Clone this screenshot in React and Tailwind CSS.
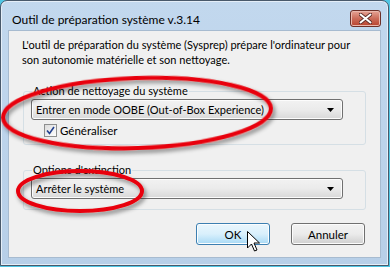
import React from "react";

function Dropdown({ text }) {
  return (
    <div className="flex h-[21px] items-center justify-between rounded-[3px] border border-[#707070] bg-gradient-to-b from-[#f2f2f2] via-[#ebebeb] to-[#d8d8d8] pl-[4px] pr-[8px] text-[11px] shadow-[inset_0_0_0_1px_#fcfcfc]">
      <span>{text}</span>
      <svg width="7" height="4" viewBox="0 0 7 4"><path d="M0 0H7L3.5 4Z" fill="#000" /></svg>
    </div>
  );
}

export default function App() {
  return (
    <div
      className="relative h-[267px] w-[390px] overflow-hidden bg-[#4fc6e4] text-[11.5px] leading-[15px] text-black"
      style={{ fontFamily: 'Lato, "Liberation Sans", sans-serif' }}
    >
      <div className="flex h-[266px] w-[389px] flex-col rounded-t-[7px] border border-[#49596b] bg-gradient-to-b from-[#c2d8ee] to-[#b7cfe8] shadow-[inset_0_0_0_1px_#e4eef8]">
        {/* title bar */}
        <div className="flex h-[29px] items-start justify-between">
          <div className="whitespace-nowrap pl-[11px] pt-[11px] text-[12px] text-[#000]">Outil de préparation système v.3.14</div>
          <div className="mr-[7px] mt-[9px] flex h-[17px] w-[31px] items-center justify-center rounded-[3px] border border-[#6d3028] bg-gradient-to-b from-[#e6a496] via-[#cb6c5a] to-[#b8412c] shadow-[inset_0_0_0_1px_#eab8ad]">
            <svg width="13" height="11" viewBox="0 0 13 11">
              <path d="M1.5 1.5L11.5 9.5M11.5 1.5L1.5 9.5" stroke="#5a2b26" strokeWidth="3.6" strokeLinecap="round" />
              <path d="M1.5 1.5L11.5 9.5M11.5 1.5L1.5 9.5" stroke="#fff" strokeWidth="2" strokeLinecap="round" />
            </svg>
          </div>
        </div>
        {/* client */}
        <div className="mx-[7px] flex h-[228px] flex-col border border-[#a7bbd0] bg-[#f0f0f0]">
          <p className="ml-[13px] mt-[6px] whitespace-nowrap text-[11px]">
            L'outil de préparation du système (Sysprep) prépare l'ordinateur pour
            <br />
            son autonomie matérielle et son nettoyage.
          </p>
          <fieldset className="mx-[14px] mt-[17px] h-[61px] rounded-[3px] border border-[#d5dfe5] px-[7px]">
            <legend className="ml-[1px] px-[1px] text-[11px] leading-[14px]">Action de nettoyage du système</legend>
            <div className="mr-[15px] mt-[1px]">
              <Dropdown text="Entrer en mode OOBE (Out-of-Box Experience)" />
            </div>
            <div className="ml-[13px] mt-[3px] flex items-center gap-[3px]">
              <div className="flex h-[13px] w-[13px] items-center justify-center border border-[#8e8f8f] bg-gradient-to-br from-[#dcdcdc] to-[#fefefe]">
                <svg width="9" height="9" viewBox="0 0 9 9"><path d="M1 4.5L3.5 7.5L8 1" stroke="#21408f" strokeWidth="1.6" fill="none" /></svg>
              </div>
              <span>Généraliser</span>
            </div>
          </fieldset>
          <fieldset className="mx-[14px] mt-[18px] h-[47px] rounded-[3px] border border-[#d5dfe5] px-[7px]">
            <legend className="ml-[1px] px-[1px] text-[11px] leading-[14px]">Options d'extinction</legend>
            <div className="mr-[15px] mt-[1px]">
              <Dropdown text="Arrêter le système" />
            </div>
          </fieldset>
          <div className="mr-[15px] mt-[13px] flex justify-end gap-[21px]">
            <div className="flex h-[22px] w-[74px] items-center justify-center rounded-[3px] border border-[#3c7fb1] bg-gradient-to-b from-[#eaf6fd] via-[#d9f0fc] to-[#a7d9f5] shadow-[inset_0_0_0_1px_#fbfdfe]">OK</div>
            <div className="flex h-[22px] w-[74px] items-center justify-center rounded-[3px] border border-[#707070] bg-gradient-to-b from-[#f2f2f2] via-[#ebebeb] to-[#cfcfcf] shadow-[inset_0_0_0_1px_#fcfcfc]">Annuler</div>
          </div>
        </div>
      </div>

      {/* cursor */}
      <svg className="absolute left-[247px] top-[231px]" width="14" height="22" viewBox="0 0 14 22">
        <path d="M0.5 0.5V17L4.5 13L7.5 20L10 19L7 12H12.5Z" fill="#fff" stroke="#000" strokeWidth="1" strokeLinejoin="round" />
      </svg>

      {/* red annotation ellipses */}
      <svg className="pointer-events-none absolute left-0 top-0" width="390" height="267" viewBox="0 0 390 267">
        <defs>
          <filter id="sh" x="-10%" y="-30%" width="120%" height="160%">
            <feDropShadow dx="2" dy="3" stdDeviation="2" floodColor="#000" floodOpacity="0.45" />
          </filter>
        </defs>
        <ellipse cx="137" cy="113" rx="134" ry="35" transform="rotate(-2 137 113)" fill="none" stroke="#e8000a" strokeWidth="4" filter="url(#sh)" />
        <ellipse cx="80" cy="191" rx="62" ry="20" fill="none" stroke="#e8000a" strokeWidth="4" filter="url(#sh)" />
      </svg>
    </div>
  );
}
